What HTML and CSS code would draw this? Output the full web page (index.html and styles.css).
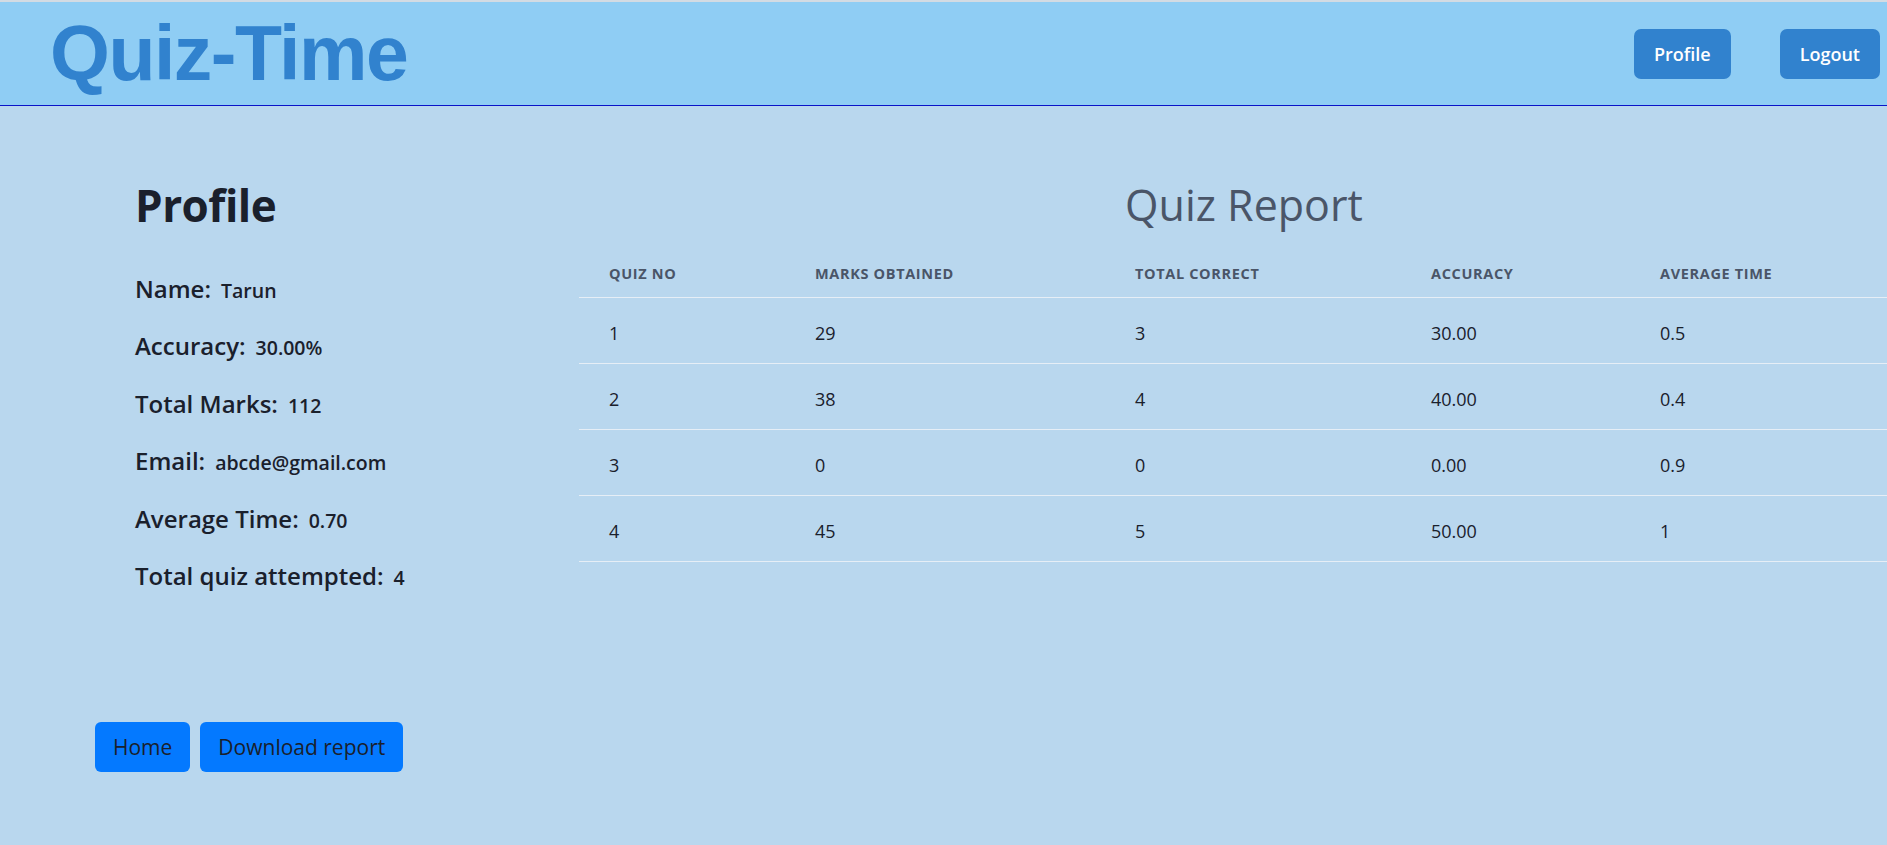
FILE: index.html
```html
<!DOCTYPE html>
<html lang="en">
<head>
<meta charset="utf-8">
<title>Quiz-Time</title>
<link rel="stylesheet" href="styles.css">
</head>
<body>
<header class="topbar">
  <div class="logo">Quiz-Time</div>
  <nav class="nav">
    <button class="nav-btn">Profile</button>
    <button class="nav-btn">Logout</button>
  </nav>
</header>
<main class="content">
  <div class="columns">
    <section class="profile">
      <h2 class="heading">Profile</h2>
      <div class="info">
        <div class="row"><span class="label">Name:</span><span class="value">Tarun</span></div>
        <div class="row"><span class="label">Accuracy:</span><span class="value">30.00%</span></div>
        <div class="row"><span class="label">Total Marks:</span><span class="value">112</span></div>
        <div class="row"><span class="label">Email:</span><span class="value">abcde@gmail.com</span></div>
        <div class="row"><span class="label">Average Time:</span><span class="value">0.70</span></div>
        <div class="row"><span class="label">Total quiz attempted:</span><span class="value">4</span></div>
      </div>
    </section>
    <section class="report">
      <h2 class="heading report-title">Quiz Report</h2>
      <table class="table">
        <colgroup>
          <col class="c1"><col class="c2"><col class="c3"><col class="c4"><col class="c5">
        </colgroup>
        <thead>
          <tr><th>Quiz No</th><th>Marks Obtained</th><th>Total Correct</th><th>Accuracy</th><th>Average Time</th></tr>
        </thead>
        <tbody>
          <tr><td>1</td><td>29</td><td>3</td><td>30.00</td><td>0.5</td></tr>
          <tr><td>2</td><td>38</td><td>4</td><td>40.00</td><td>0.4</td></tr>
          <tr><td>3</td><td>0</td><td>0</td><td>0.00</td><td>0.9</td></tr>
          <tr><td>4</td><td>45</td><td>5</td><td>50.00</td><td>1</td></tr>
        </tbody>
      </table>
    </section>
  </div>
  <div class="actions">
    <button class="action-btn">Home</button>
    <button class="action-btn">Download report</button>
  </div>
</main>
</body>
</html>
```

FILE: styles.css
```css
html, body {
  margin: 0;
  padding: 0;
  background: #b9d7ee;
  overflow: hidden;
  font-family: "Open Sans", "Noto Sans", sans-serif;
  color: #1a202c;
}

.topbar {
  display: flex;
  align-items: center;
  justify-content: space-between;
  height: 103px;
  padding: 0 7px 0 50px;
  background: #8fcdf4;
  border-top: 2px solid #d3dbe3;
  border-bottom: 1px solid #0a14c8;
}

.logo {
  font-family: "Liberation Sans", Arial, sans-serif;
  font-weight: 700;
  font-size: 77px;
  line-height: 1;
  color: #3182ce;
  letter-spacing: -1.5px;
}

.nav {
  display: flex;
  gap: 49px;
}

.nav-btn {
  height: 50px;
  padding: 0 20px;
  border: none;
  border-radius: 7px;
  background: #3182ce;
  color: #ffffff;
  font-family: "Open Sans", sans-serif;
  font-size: 18px;
  font-weight: 600;
}

.columns {
  display: flex;
  padding-top: 72px;
}

.profile {
  flex: 0 0 444px;
  padding-left: 135px;
}

.heading {
  margin: 0;
  font-size: 44px;
  line-height: 54px;
  font-weight: 700;
  letter-spacing: -0.5px;
  color: #1a202c;
}

.info {
  display: flex;
  flex-direction: column;
  gap: 21.4px;
  margin-top: 39px;
}

.row {
  display: flex;
  align-items: baseline;
  gap: 10px;
  height: 36px;
  line-height: 36px;
}

.label {
  font-size: 24px;
  font-weight: 600;
}

.value {
  font-size: 19.5px;
  font-weight: 600;
}

.report {
  flex: 0 0 1330px;
}

.report-title {
  text-align: center;
  font-size: 43px;
  font-weight: 500;
  letter-spacing: 0;
  color: #4a5568;
}

.table {
  width: 1330px;
  margin-top: 15px;
  border-collapse: collapse;
}

.c1 { width: 206px; }
.c2 { width: 320px; }
.c3 { width: 296px; }
.c4 { width: 229px; }

.table th {
  padding: 17px 30px 13px;
  text-align: left;
  font-size: 14.5px;
  line-height: 20px;
  font-weight: 700;
  letter-spacing: 0.045em;
  text-transform: uppercase;
  color: #4a5568;
  border-bottom: 1px solid #e6eef6;
}

.table td {
  padding: 23px 30px 17px;
  font-size: 18px;
  line-height: 25px;
  color: #1a202c;
  border-bottom: 1px solid #e6eef6;
}

.actions {
  display: flex;
  gap: 10px;
  padding: 128px 0 0 95px;
}

.action-btn {
  height: 50px;
  padding: 0 18px;
  border: none;
  border-radius: 6px;
  background: #0479ff;
  color: #1a202c;
  font-family: "Open Sans", sans-serif;
  font-size: 21px;
  font-weight: 400;
}
```
